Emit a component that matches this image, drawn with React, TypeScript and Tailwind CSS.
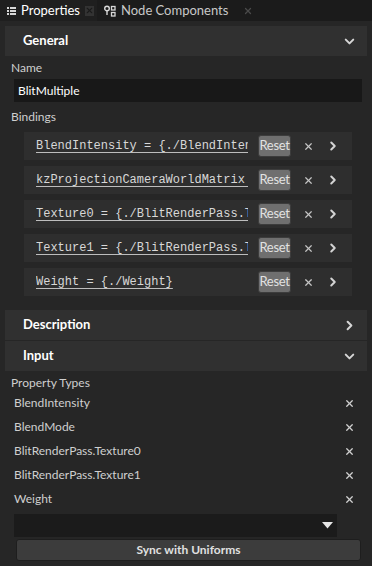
import { ChevronDown, ChevronRight, X } from "lucide-react";

const bindings = [
  "BlendIntensity = {./BlendIntensity}",
  "kzProjectionCameraWorldMatrix = {./kzProjectionCameraWorldMatrix}",
  "Texture0 = {./BlitRenderPass.Texture0}",
  "Texture1 = {./BlitRenderPass.Texture1}",
  "Weight = {./Weight}",
];

const propertyTypes = [
  "BlendIntensity",
  "BlendMode",
  "BlitRenderPass.Texture0",
  "BlitRenderPass.Texture1",
  "Weight",
];

function SectionHeader({ title, open }: { title: string; open: boolean }) {
  return (
    <div className="h-[30px] bg-[#303030] flex items-center justify-between pl-[18px] pr-[10px]">
      <span className="text-[13px] font-bold text-white">{title}</span>
      {open ? (
        <ChevronDown size={15} strokeWidth={3.2} className="text-[#d6d6d6]" />
      ) : (
        <ChevronRight size={15} strokeWidth={3.2} className="text-[#d6d6d6]" />
      )}
    </div>
  );
}

export default function App() {
  return (
    <div
      className="w-[372px] h-[566px] bg-[#262626] overflow-hidden text-[12px] text-[#cfcfcf]"
      style={{ fontFamily: "Lato, 'Open Sans', sans-serif" }}
    >
      {/* Tabs */}
      <div className="h-[21px] bg-[#1b1b1b] flex items-stretch">
        <div className="w-[97px] bg-[#1f1f1f] flex items-center pl-[7px] gap-[5px]">
          <svg width="9" height="8" viewBox="0 0 9 8" className="shrink-0">
            <rect x="0" y="0" width="2" height="2" fill="#d8d8d8" />
            <rect x="3" y="0" width="6" height="2" fill="#d8d8d8" />
            <rect x="0" y="3" width="2" height="2" fill="#d8d8d8" />
            <rect x="3" y="3" width="6" height="2" fill="#d8d8d8" />
            <rect x="0" y="6" width="2" height="2" fill="#d8d8d8" />
            <rect x="3" y="6" width="6" height="2" fill="#d8d8d8" />
          </svg>
          <span className="text-[13px] text-white">Properties</span>
          <div className="ml-auto mr-[4px] w-[10px] h-[10px] bg-[#333333] flex items-center justify-center">
            <X size={9} strokeWidth={3} className="text-[#1b1b1b]" />
          </div>
        </div>
        <div className="flex items-center pl-[7px] gap-[5px]">
          <svg width="12" height="12" viewBox="0 0 12 12" className="shrink-0">
            <circle cx="3" cy="3.5" r="2.3" fill="none" stroke="#d8d8d8" strokeWidth="1.4" />
            <line x1="3" y1="6" x2="3" y2="10" stroke="#d8d8d8" strokeWidth="1.4" />
            <rect x="7.5" y="1.5" width="3.5" height="3.5" fill="none" stroke="#d8d8d8" strokeWidth="1.3" />
            <rect x="7.5" y="7.5" width="3.5" height="3.5" fill="none" stroke="#d8d8d8" strokeWidth="1.3" />
          </svg>
          <span className="text-[13px] text-[#c8c8c8]">Node Components</span>
          <X size={10} strokeWidth={3} className="ml-[10px] text-[#4a4a4a]" />
        </div>
      </div>

      <div className="px-[5px] pt-[5px]">
        <SectionHeader title="General" open />
      </div>

      {/* General body */}
      <div className="px-[11px]">
        <div className="h-[16px] mt-[4px] leading-[16px]">Name</div>
        <div className="mt-[3px] ml-[3px] w-[348px] h-[23px] bg-[#181818] flex items-center pl-[4px] text-white">
          BlitMultiple
        </div>
        <div className="h-[16px] mt-[7px] leading-[16px]">Bindings</div>
        <div className="mt-[7px] ml-[13px] w-[328px] flex flex-col gap-[6px]">
          {bindings.map((b) => (
            <div key={b} className="h-[28px] bg-[#2e2e2e] flex items-center pl-[12px]">
              <span
                className="block w-[212px] shrink-0 overflow-hidden whitespace-nowrap text-[12px] text-[#d8d8d8] underline underline-offset-[3px] decoration-[#bdbdbd]"
                style={{ fontFamily: "'Liberation Mono', monospace" }}
              >
                {b}
              </span>
              <button className="ml-[10px] w-[33px] h-[22px] shrink-0 bg-[#6f6f6f] border border-[#3c3c3c] rounded-[3px] text-[13px] tracking-[-0.3px] text-[#e2e2e2] flex items-center justify-center">
                Reset
              </button>
              <X size={11} strokeWidth={2.6} className="ml-[12px] shrink-0 text-[#c4c4c4]" />
              <ChevronRight size={14} strokeWidth={3.4} className="ml-[12px] shrink-0 text-[#d4d4d4]" />
            </div>
          ))}
        </div>
      </div>

      <div className="px-[5px] pt-[14px] flex flex-col gap-[1px]">
        <SectionHeader title="Description" open={false} />
        <SectionHeader title="Input" open />
      </div>

      {/* Input body */}
      <div className="px-[11px]">
        <div className="h-[16px] mt-[4px] leading-[16px]">Property Types</div>
        <div className="flex flex-col">
          {propertyTypes.map((p) => (
            <div key={p} className="h-[24px] flex items-center justify-between pl-[3px] pr-[6px]">
              <span>{p}</span>
              <X size={11} strokeWidth={2.8} className="text-[#d0d0d0]" />
            </div>
          ))}
        </div>
        <div className="mt-[3px] ml-[3px] w-[323px] h-[23px] bg-[#1b1b1b] flex items-center justify-end pr-[4px]">
          <svg width="11" height="7" viewBox="0 0 11 7">
            <polygon points="0,0 11,0 5.5,6.5" fill="#e6e6e6" />
          </svg>
        </div>
        <button className="mt-[2px] ml-[5px] w-[345px] h-[22px] bg-[#3c3c3c] border border-[#1e1e1e] rounded-[3px] text-[12px] font-bold text-[#e0e0e0] flex items-center justify-center">
          Sync with Uniforms
        </button>
      </div>
    </div>
  );
}
